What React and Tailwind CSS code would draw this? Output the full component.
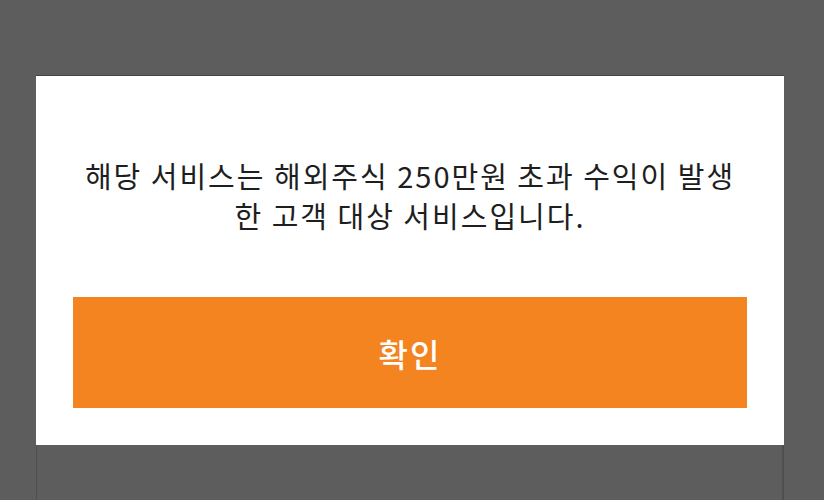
import React from "react";

const App = () => {
  return (
    <div
      className="h-[500px] w-full overflow-hidden bg-[#5d5d5d] pt-[75px] px-[36px]"
      style={{ fontFamily: '"Noto Sans CJK KR", "Noto Sans", sans-serif' }}
    >
      {/* panel behind the dimmed layer */}
      <div className="h-[500px] w-[748px] border-l border-r-2 border-[#4f4f4f]">
        <div className="-mx-px -mr-[2px] border-t border-[#454545] bg-white px-[37px] pb-[37px] pt-[79px]">
          <p className="text-center text-[29px] leading-[40px] tracking-[2px] text-[#1e1e1e]">
            해당 서비스는 해외주식 250만원 초과 수익이 발생
            <br />한 고객 대상 서비스입니다.
          </p>
          <button
            type="button"
            className="mt-[62px] flex h-[111px] w-full items-center justify-center bg-[#f4841f] text-[32px] font-medium tracking-[2px] text-white"
          >
            확인
          </button>
        </div>
      </div>
    </div>
  );
};

export default App;
